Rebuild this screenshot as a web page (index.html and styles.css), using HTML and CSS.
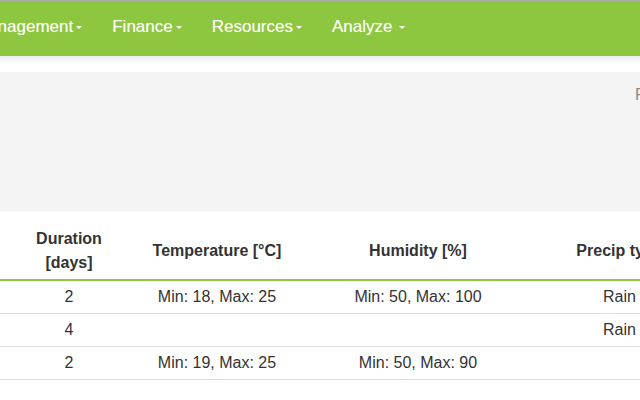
FILE: index.html
```html
<!DOCTYPE html>
<html lang="en">
<head>
<meta charset="utf-8">
<title>Weather conditions</title>
<link rel="stylesheet" href="styles.css">
</head>
<body>
  <header class="topbar">
    <nav class="navbar">
      <ul class="nav">
        <li class="nav-item">Management<span class="caret"></span></li>
        <li class="nav-item">Finance<span class="caret"></span></li>
        <li class="nav-item">Resources<span class="caret"></span></li>
        <li class="nav-item">Analyze<span class="caret caret-spaced"></span></li>
      </ul>
    </nav>
  </header>
  <div class="shade"></div>
  <section class="panel">
    <span class="panel-label">Filter</span>
  </section>
  <table class="grid">
    <colgroup>
      <col class="c-dur">
      <col class="c-temp">
      <col class="c-hum">
      <col class="c-prec">
    </colgroup>
    <thead>
      <tr>
        <th>Duration<br>[days]</th>
        <th>Temperature [°C]</th>
        <th>Humidity [%]</th>
        <th>Precip type</th>
      </tr>
    </thead>
    <tbody>
      <tr><td>2</td><td>Min: 18, Max: 25</td><td>Min: 50, Max: 100</td><td>Rain</td></tr>
      <tr><td>4</td><td></td><td></td><td>Rain</td></tr>
      <tr><td>2</td><td>Min: 19, Max: 25</td><td>Min: 50, Max: 90</td><td></td></tr>
    </tbody>
  </table>
</body>
</html>
```
FILE: styles.css
```css
html, body {
  margin: 0;
  padding: 0;
  background: #ffffff;
  width: 640px;
  overflow: hidden;
  font-family: "Liberation Sans", Arial, sans-serif;
  color: #333333;
}

.topbar {
  border-top: 1px solid #a9a9a9;
  background: #8dc63f;
  height: 55px;
  overflow: hidden;
}

.navbar {
  height: 100%;
}

.nav {
  list-style: none;
  margin: 0 0 0 -41px;
  padding: 0;
  display: flex;
  height: 100%;
  align-items: center;
  white-space: nowrap;
}

.nav-item {
  padding: 0 15px;
  font-size: 17px;
  line-height: 20px;
  color: #ffffff;
  text-shadow: 0 0 1px rgba(255, 255, 200, 0.35);
  display: flex;
  align-items: center;
  margin-top: -4px;
}

.caret {
  display: inline-block;
  width: 0;
  height: 0;
  margin-left: 3px;
  margin-top: 2px;
  border-top: 3px solid #ffffff;
  border-left: 3px solid transparent;
  border-right: 3px solid transparent;
}

.caret-spaced {
  margin-left: 7px;
}

.shade {
  height: 16px;
  background: linear-gradient(#ededed, #ffffff 7px, #ffffff);
}

.panel {
  background: #f4f4f4;
  height: 139px;
  padding-top: 14px;
  box-sizing: border-box;
  overflow: hidden;
  white-space: nowrap;
}

.panel-label {
  display: inline-block;
  margin-left: 635px;
  font-size: 16px;
  color: #8a8a8a;
}

.grid {
  margin-top: 8px;
  border-collapse: collapse;
  table-layout: fixed;
  width: 699px;
  font-size: 16px;
}

.c-dur { width: 138px; }
.c-temp { width: 158px; }
.c-hum { width: 244px; }
.c-prec { width: 159px; }

.grid th {
  font-weight: bold;
  line-height: 24px;
  padding: 8px 8px 4px;
  text-align: center;
  vertical-align: middle;
  border-bottom: 2px solid #8dc63f;
  color: #333333;
  white-space: nowrap;
}

.grid td {
  line-height: 20px;
  padding: 6px 8px;
  text-align: center;
  border-bottom: 1px solid #dddddd;
  height: 20px;
}
```
